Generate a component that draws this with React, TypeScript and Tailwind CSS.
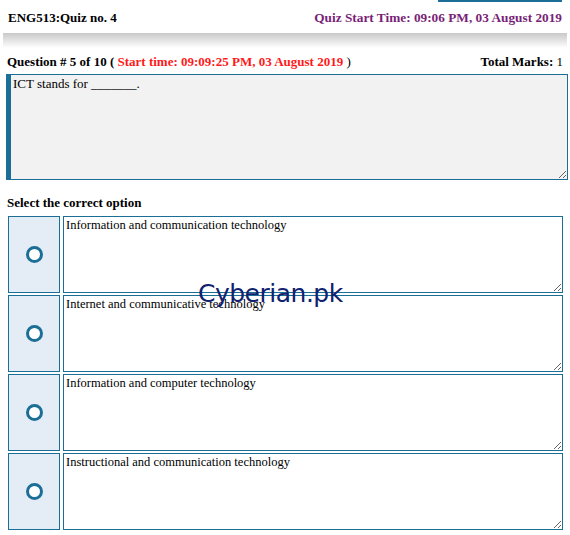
const options = [
  'Information and communication technology',
  'Internet and communicative technology',
  'Information and computer technology',
  'Instructional and communication technology',
];

function OptionRow({ text }: { text: string }) {
  return (
    <div className="flex gap-[3px] h-[77px]">
      <div className="w-[52px] shrink-0 border border-[#1b6f96] bg-[#e4ecf5] flex items-center justify-center">
        <span className="block w-[17px] h-[17px] rounded-full border-[3px] border-[#1b6f96] bg-white" />
      </div>
      <textarea
        readOnly
        defaultValue={text}
        className="flex-1 h-full border border-[#1b6f96] bg-white px-[2px] py-0 text-[12.5px] leading-[16px] text-black outline-none"
      />
    </div>
  );
}

export default function App() {
  return (
    <div className="relative w-[570px] h-[535px] bg-white font-['Liberation_Serif',serif] text-black overflow-hidden">
      <div className="absolute left-[438px] top-0 w-[124px] h-[2px] bg-[#1b6f96]" />

      <div className="flex justify-between items-center px-[8px] pt-[6px] h-[30px] font-bold text-[13px]">
        <span>ENG513:Quiz no. 4</span>
        <span className="text-[#7a1f78] text-[13.3px]">Quiz Start Time: 09:06 PM, 03 August 2019</span>
      </div>

      <div className="mx-[3px] mt-[3px] h-[15px] bg-gradient-to-b from-[#c9c9c9] to-white" />

      <div className="flex justify-between items-center px-[7px] mt-[4px] text-[13px] text-black">
        <span>
          <b>Question # 5 of 10 ( </b>
          <b className="text-[#ff1a1a]">Start time: 09:09:25 PM, 03 August 2019</b> )
        </span>
        <span>
          <b>Total Marks:</b> <span className="text-black">1</span>
        </span>
      </div>

      <div className="ml-[6px] mr-[2px] mt-[2px] flex h-[106px] border border-l-[5px] border-[#1b6f96]">
        <textarea
          readOnly
          defaultValue="ICT stands for _______."
          className="flex-1 bg-[#f2f2f2] pl-[2px] pt-[1px] text-[13px] leading-[16px] outline-none"
        />
      </div>

      <div className="px-[7px] mt-[13px] font-bold text-[13px]">Select the correct option</div>

      <div className="mt-[4px] ml-[8px] mr-[7px] flex flex-col gap-[2px]">
        {options.map((o) => (
          <OptionRow key={o} text={o} />
        ))}
      </div>

      <div className="absolute left-[198px] top-[278px] text-[25px] leading-[32px] text-[#10216e] font-['DejaVu_Sans',sans-serif] tracking-[-0.5px]">
        Cyberian.pk
      </div>
    </div>
  );
}
